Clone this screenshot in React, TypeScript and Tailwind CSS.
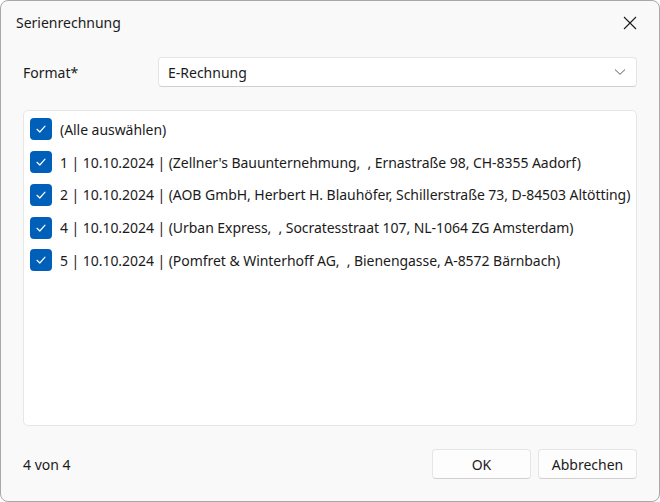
import React from "react";

const rows = [
  "(Alle auswählen)",
  "1 | 10.10.2024 | (Zellner's Bauunternehmung,  , Ernastraße 98, CH-8355 Aadorf)",
  "2 | 10.10.2024 | (AOB GmbH, Herbert H. Blauhöfer, Schillerstraße 73, D-84503 Altötting)",
  "4 | 10.10.2024 | (Urban Express,  , Socratesstraat 107, NL-1064 ZG Amsterdam)",
  "5 | 10.10.2024 | (Pomfret & Winterhoff AG,  , Bienengasse, A-8572 Bärnbach)",
];

function Check() {
  return (
    <div className="w-[22px] h-[22px] rounded-[4px] bg-[#005fb8] flex items-center justify-center shrink-0">
      <svg width="12" height="12" viewBox="0 0 12 12" fill="none">
        <path d="M2 6.3 L4.8 9 L10 3.2" stroke="white" strokeWidth="1.2" strokeLinecap="round" strokeLinejoin="round" />
      </svg>
    </div>
  );
}

export default function App() {
  return (
    <div className="w-[660px] h-[502px] bg-white" style={{ fontFamily: '"Noto Sans", sans-serif' }}>
      <div className="w-[660px] h-[502px] rounded-[8px] border border-[#a8a8a8] bg-[#f9f9f9] flex flex-col text-[14px] text-[#1b1b1b] overflow-hidden">
        <div className="h-[43px] flex items-center justify-between pl-[15px] pr-[22px]">
          <span className="text-[14px]">Serienrechnung</span>
          <svg width="14" height="14" viewBox="0 0 14 14">
            <path d="M1 1 L13 13 M13 1 L1 13" stroke="#1b1b1b" strokeWidth="1.1" />
          </svg>
        </div>
        <div className="flex items-center mt-[13px] pl-[22px] pr-[22px]">
          <span className="w-[135px]">Format*</span>
          <div className="flex-1 h-[30px] bg-white border border-[#e5e5e5] border-b-[#d0d0d0] rounded-[4px] flex items-center justify-between pl-[9px] pr-[10px]">
            <span>E-Rechnung</span>
            <svg width="12" height="8" viewBox="0 0 12 8">
              <path d="M1 1.5 L6 6.3 L11 1.5" stroke="#5a5a5a" strokeWidth="1" fill="none" />
            </svg>
          </div>
        </div>
        <div className="mx-[22px] mt-[23px] h-[316px] bg-white border border-[#e6e6e6] rounded-[5px] pt-[2px] pl-[6px]">
          {rows.map((r) => (
            <div key={r} className="h-[32.75px] flex items-center gap-[8px] whitespace-pre tracking-[-0.05px]">
              <Check />
              <span>{r}</span>
            </div>
          ))}
        </div>
        <div className="flex items-center justify-between mt-[23px] pl-[22px] pr-[22px]">
          <span>4 von 4</span>
          <div className="flex gap-[7px]">
            <button className="w-[99px] h-[30px] bg-[#fdfdfd] border border-[#e5e5e5] border-b-[#d0d0d0] rounded-[4px]">OK</button>
            <button className="w-[99px] h-[30px] bg-[#fdfdfd] border border-[#e5e5e5] border-b-[#d0d0d0] rounded-[4px]">Abbrechen</button>
          </div>
        </div>
      </div>
    </div>
  );
}
